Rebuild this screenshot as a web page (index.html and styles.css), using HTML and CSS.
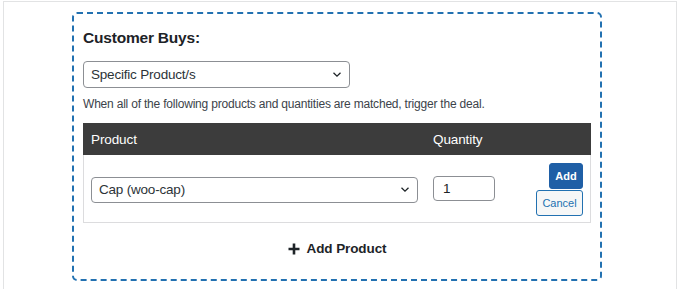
FILE: index.html
```html
<!DOCTYPE html>
<html lang="en">
<head>
    <meta charset="UTF-8">
    <meta name="viewport" content="width=device-width, initial-scale=1.0">
    <title>Customer Buys</title>
    <link rel="stylesheet" href="styles.css">
</head>
<body>
    <div class="panel">
        <div class="deal-box">
            <h2 class="deal-title">Customer Buys:</h2>

            <div class="select-box buys-type">
                <span>Specific Product/s</span>
                <svg class="chevron" width="8" height="5" viewBox="0 0 8 5"><path d="M0.5 0.7l3.5 3.4 3.5-3.4" fill="none" stroke="#1d2327" stroke-width="1.3"/></svg>
            </div>
            <p class="deal-desc">When all of the following products and quantities are matched, trigger the deal.</p>

            <div class="product-table">
                <div class="table-head">
                    <span>Product</span>
                    <span>Quantity</span>
                </div>
                <div class="table-row">
                    <div class="select-box product-select">
                        <span>Cap (woo-cap)</span>
                        <svg class="chevron" width="8" height="5" viewBox="0 0 8 5"><path d="M0.5 0.7l3.5 3.4 3.5-3.4" fill="none" stroke="#1d2327" stroke-width="1.3"/></svg>
                    </div>
                    <div class="qty-input">1</div>
                    <div class="row-actions">
                        <button class="btn btn-add">Add</button>
                        <button class="btn btn-cancel">Cancel</button>
                    </div>
                </div>
            </div>

            <div class="add-product">
                <svg width="12" height="12" viewBox="0 0 12 12"><path d="M6 0.5v11M0.5 6h11" stroke="#1d2327" stroke-width="2.6"/></svg>
                <span>Add Product</span>
            </div>
        </div>
    </div>
</body>
</html>
```

FILE: styles.css
```css
body {
    margin: 0;
    background-color: #fff;
    font-family: 'Liberation Sans', Arial, sans-serif;
    color: #1d2327;
}

.panel {
    margin: 1px 0 0 3px;
    width: 674px;
    height: 300px;
    box-sizing: border-box;
    border: 1px solid #e2e3e4;
    padding: 10px 0 0 68px;
}

.deal-box {
    width: 530px;
    height: 269px;
    box-sizing: border-box;
    border: 2px dashed #2271b1;
    border-radius: 5px;
    padding: 14px 9px 0 9px;
}

.deal-title {
    margin: 0 0 13px;
    font-size: 15.5px;
    letter-spacing: -0.2px;
    line-height: 20px;
    font-weight: bold;
}

.select-box {
    display: flex;
    align-items: center;
    justify-content: space-between;
    box-sizing: border-box;
    border: 1px solid #8c8f94;
    border-radius: 4px;
    background-color: #fff;
    padding: 0 8px 0 7px;
    font-size: 13.5px;
    letter-spacing: -0.2px;
    color: #2c3338;
}

.buys-type {
    width: 267px;
    height: 27px;
}

.deal-desc {
    margin: 8px 0 11px;
    font-size: 12px;
    letter-spacing: -0.2px;
    line-height: 16px;
    color: #3c434a;
}

.product-table {
    width: 508px;
}

.table-head {
    display: grid;
    grid-template-columns: 327px 62px 1fr;
    column-gap: 15px;
    align-items: center;
    height: 32px;
    padding: 0 8px;
    background-color: #3c3c3c;
    color: #fff;
    font-size: 13.5px;
    letter-spacing: -0.1px;
}

.table-head span {
    white-space: nowrap;
}

.table-row {
    display: grid;
    grid-template-columns: 327px 62px 1fr;
    column-gap: 15px;
    align-items: center;
    border: 1px solid #dcdcde;
    border-top: none;
    padding: 8px 7px 6px 7px;
}

.product-select {
    height: 26px;
}

.qty-input {
    box-sizing: border-box;
    height: 25px;
    border: 1px solid #8c8f94;
    border-radius: 4px;
    padding: 0 9px;
    font-size: 13.5px;
    line-height: 23px;
    margin-top: -3px;
}

.row-actions {
    display: flex;
    flex-direction: column;
    align-items: flex-end;
    gap: 1px;
}

.btn {
    box-sizing: border-box;
    height: 26px;
    border-radius: 3px;
    font-family: 'Liberation Sans', Arial, sans-serif;
    font-size: 11px;
    padding: 0;
    cursor: pointer;
}

.btn-add {
    width: 34px;
    background-color: #1f5fa6;
    border: 1px solid #1f5fa6;
    color: #fff;
    font-weight: bold;
}

.btn-cancel {
    width: 47px;
    background-color: #f6f7f7;
    border: 1px solid #2271b1;
    color: #2271b1;
}

.add-product {
    display: flex;
    align-items: center;
    justify-content: center;
    gap: 7px;
    margin-top: 17px;
    font-size: 13.5px;
    letter-spacing: -0.1px;
    line-height: 18px;
    font-weight: bold;
}
```
